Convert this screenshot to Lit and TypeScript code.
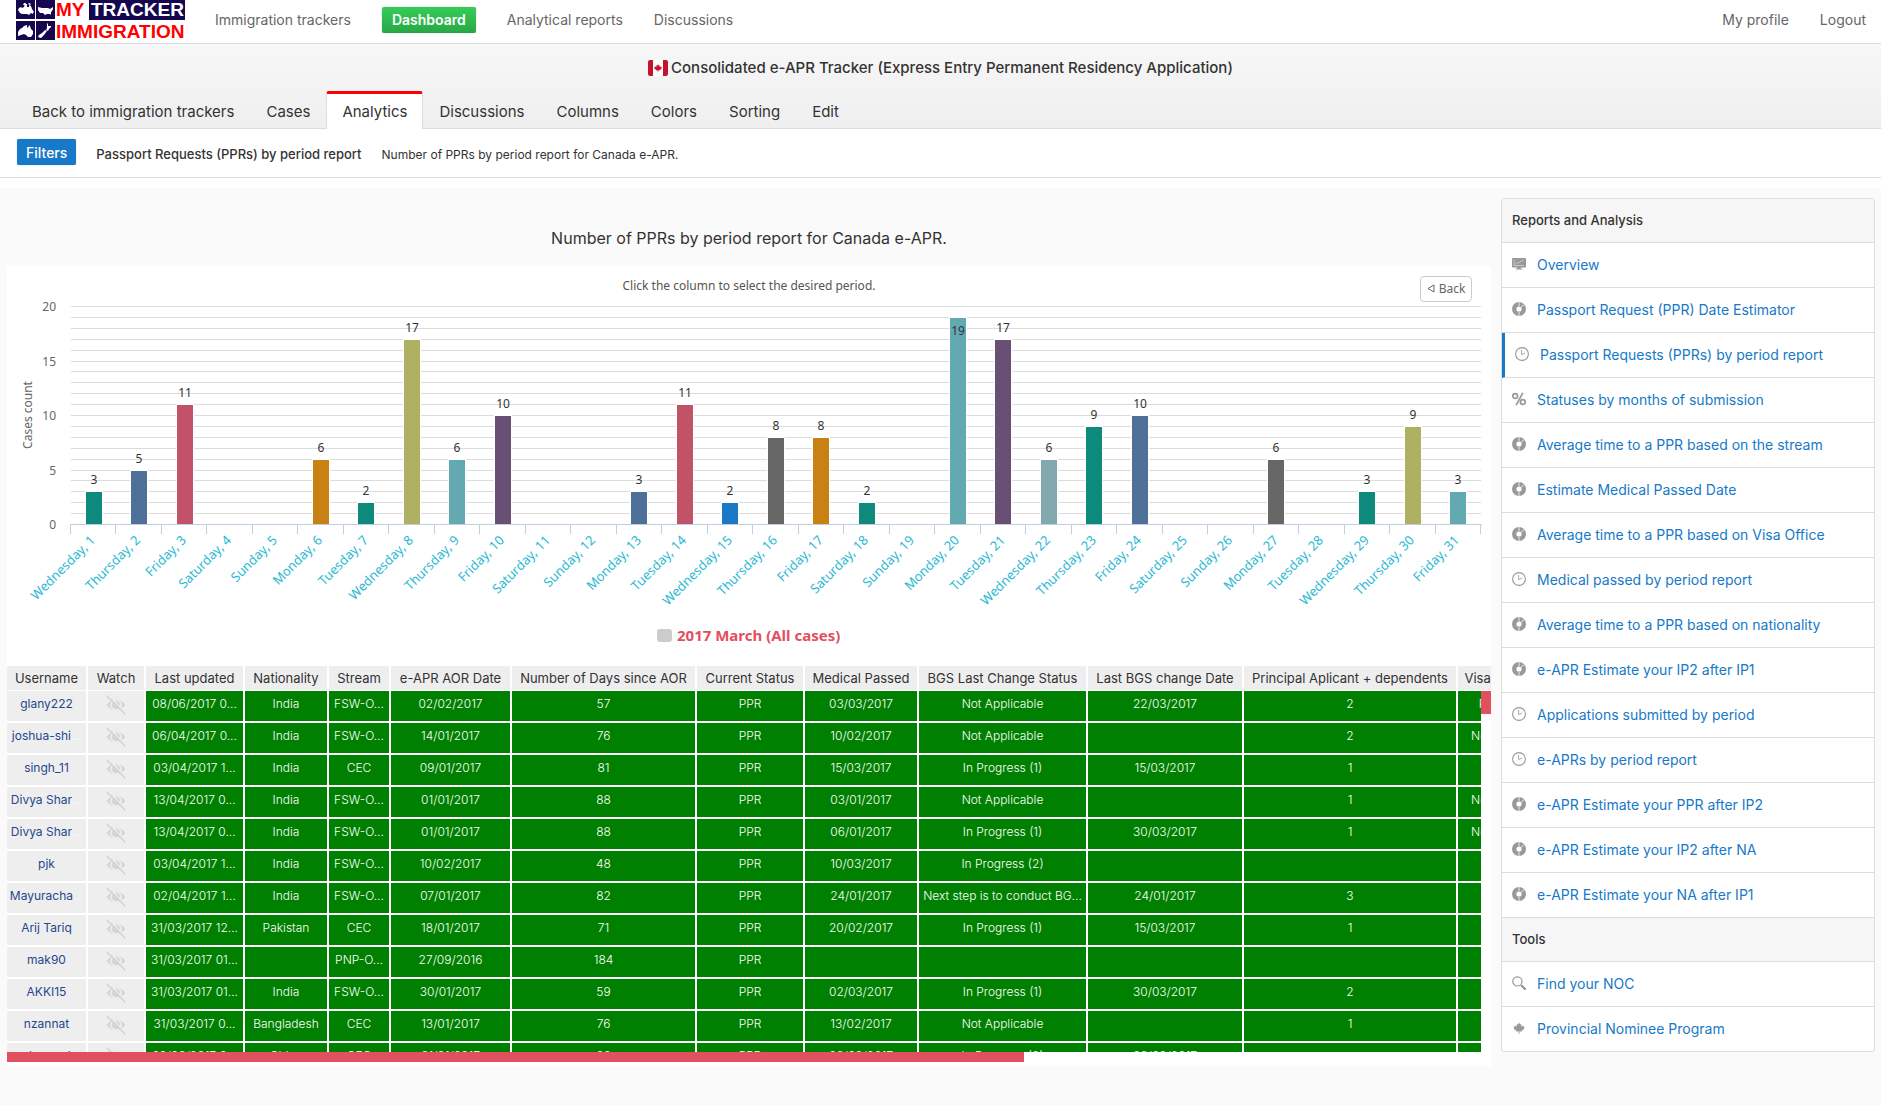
import { LitElement, html, svg, css, nothing } from "lit";
import { customElement, property } from "lit/decorators.js";
import { classMap } from "lit/directives/class-map.js";

const COLORS: Record<string, string> = {
  teal: "#0e8a7d", blue: "#4f7199", rose: "#c25268", orange: "#c98114", olive: "#afb162",
  sea: "#62a9b1", plum: "#684f73", azure: "#1779c8", grey: "#666666", steel: "#82a8b0",
};

const WEEK = ["Wednesday", "Thursday", "Friday", "Saturday", "Sunday", "Monday", "Tuesday"];

const COUNTS: Record<number, [number, string]> = {
  1: [3, "teal"], 2: [5, "blue"], 3: [11, "rose"], 6: [6, "orange"], 7: [2, "teal"],
  8: [17, "olive"], 9: [6, "sea"], 10: [10, "plum"], 13: [3, "blue"], 14: [11, "rose"],
  15: [2, "azure"], 16: [8, "grey"], 17: [8, "orange"], 18: [2, "teal"], 20: [19, "sea"],
  21: [17, "plum"], 22: [6, "steel"], 23: [9, "teal"], 24: [10, "blue"], 27: [6, "grey"],
  29: [3, "teal"], 30: [9, "olive"], 31: [3, "sea"],
};

const COLUMNS: [string, number][] = [
  ["Username", 81], ["Watch", 58], ["Last updated", 99], ["Nationality", 84], ["Stream", 62],
  ["e-APR AOR Date", 121], ["Number of Days since AOR", 185], ["Current Status", 108],
  ["Medical Passed", 114], ["BGS Last Change Status", 169], ["Last BGS change Date", 156],
  ["Principal Aplicant + dependents", 214], ["Visa Office", 82],
];

const ROWS: string[][] = [
  ["glany222", "08/06/2017 0...", "India", "FSW-O...", "02/02/2017", "57", "PPR", "03/03/2017", "Not Applicable", "22/03/2017", "2", "Poland"],
  ["joshua-shi...", "06/04/2017 0...", "India", "FSW-O...", "14/01/2017", "76", "PPR", "10/02/2017", "Not Applicable", "", "2", "New York"],
  ["singh_11", "03/04/2017 1...", "India", "CEC", "09/01/2017", "81", "PPR", "15/03/2017", "In Progress (1)", "15/03/2017", "1", ""],
  ["Divya Shar...", "13/04/2017 0...", "India", "FSW-O...", "01/01/2017", "88", "PPR", "03/01/2017", "Not Applicable", "", "1", "New York"],
  ["Divya Shar...", "13/04/2017 0...", "India", "FSW-O...", "01/01/2017", "88", "PPR", "06/01/2017", "In Progress (1)", "30/03/2017", "1", "New York"],
  ["pjk", "03/04/2017 1...", "India", "FSW-O...", "10/02/2017", "48", "PPR", "10/03/2017", "In Progress (2)", "", "", ""],
  ["Mayuracha...", "02/04/2017 1...", "India", "FSW-O...", "07/01/2017", "82", "PPR", "24/01/2017", "Next step is to conduct BG...", "24/01/2017", "3", "Ottaw"],
  ["Arij Tariq", "31/03/2017 12...", "Pakistan", "CEC", "18/01/2017", "71", "PPR", "20/02/2017", "In Progress (1)", "15/03/2017", "1", ""],
  ["mak90", "31/03/2017 01...", "", "PNP-O...", "27/09/2016", "184", "PPR", "", "", "", "", ""],
  ["AKKI15", "31/03/2017 01...", "India", "FSW-O...", "30/01/2017", "59", "PPR", "02/03/2017", "In Progress (1)", "30/03/2017", "2", "Ottaw"],
  ["nzannat", "31/03/2017 0...", "Bangladesh", "CEC", "13/01/2017", "76", "PPR", "13/02/2017", "Not Applicable", "", "1", ""],
  ["ahsanud", "29/03/2017 0...", "China", "CEC", "31/01/2017", "60", "PPR", "02/03/2017", "In Progress (2)", "02/03/2017", "", ""],
];

const REPORTS: [string, string][] = [
  ["screen", "Overview"],
  ["donut", "Passport Request (PPR) Date Estimator"],
  ["clock", "Passport Requests (PPRs) by period report"],
  ["percent", "Statuses by months of submission"],
  ["donut", "Average time to a PPR based on the stream"],
  ["donut", "Estimate Medical Passed Date"],
  ["donut", "Average time to a PPR based on Visa Office"],
  ["clock", "Medical passed by period report"],
  ["donut", "Average time to a PPR based on nationality"],
  ["donut", "e-APR Estimate your IP2 after IP1"],
  ["clock", "Applications submitted by period"],
  ["clock", "e-APRs by period report"],
  ["donut", "e-APR Estimate your PPR after IP2"],
  ["donut", "e-APR Estimate your IP2 after NA"],
  ["donut", "e-APR Estimate your NA after IP1"],
];

const TOOLS: [string, string][] = [
  ["search", "Find your NOC"],
  ["leaf", "Provincial Nominee Program"],
];

const LEAF = "M7 0.5 L8.2 3 L9.8 2.4 L9.4 5.4 L11 4.2 L11.5 5.2 L13.4 5 L12.6 7 L13.3 7.8 L10 10.2 L10.2 11.2 L7.5 10.8 L7.5 13.8 L6.5 13.8 L6.5 10.8 L3.8 11.2 L4 10.2 L0.7 7.8 L1.4 7 L0.6 5 L2.5 5.2 L3 4.2 L4.6 5.4 L4.2 2.4 L5.8 3 Z";

const ICONS: Record<string, unknown> = {
  screen: svg`
    <rect x="0" y="1" width="14" height="9.500" rx="1" fill="#999"/>
    <path d="M2 2.5v6h10M3.5 7l2-1.5 1.5 .7 2-2.2 2.5-.8" fill="none" stroke="#ddd" stroke-width="0.7"/>
    <path d="M5.5 10h3l.4 1.6h1.3v1h-6.4v-1h1.3z" fill="#999"/>`,
  donut: svg`
    <circle cx="7" cy="7" r="4.8" fill="none" stroke="#999" stroke-width="4.4"/>
    <path d="M7 0v4M7 10v4M9 5.2L12.6 2.4" stroke="#fff" stroke-width="0.8"/>`,
  clock: svg`
    <circle cx="7" cy="7" r="6.4" fill="none" stroke="#999" stroke-width="1.1"/>
    <path d="M6.6 2.8v4.8l3.6-1.6" fill="none" stroke="#aaa" stroke-width="1"/>`,
  percent: svg`
    <g fill="none" stroke="#999" stroke-width="1.7">
      <circle cx="3.2" cy="4" r="2.4"/><circle cx="10.8" cy="10" r="2.4"/>
      <path d="M10.8 .8L4.2 13.200"/>
    </g>`,
  search: svg`
    <circle cx="5.4" cy="5.4" r="4.6" fill="none" stroke="#999" stroke-width="1.2"/>
    <path d="M8.8 8.8l1.3 1.3" stroke="#999" stroke-width="1.2"/>
    <path d="M10 10l3 3" stroke="#999" stroke-width="2.4" stroke-linecap="round"/>`,
  leaf: svg`<path transform="translate(1 1) scale(.86)" d="${LEAF}" fill="#999"/>`,
};

@customElement("site-logo")
class SiteLogo extends LitElement {
  static styles = css`
    :host { display: block; }
    .logo { display: block; width: 170px; height: 41px; overflow: visible; }
    .word { font: 700 19px "Liberation Sans", sans-serif; }
  `;
  render() {
    return html`<svg class="logo" viewBox="0 0 170 41" role="img" aria-label="My Tracker Immigration">
      <g fill="#14064f">
        <rect x="0" y="0" width="19" height="19"/><rect x="20" y="0" width="19" height="19"/>
        <rect x="0" y="21" width="19" height="19"/><rect x="20" y="21" width="19" height="19"/>
        <rect x="73" y="0" width="96" height="20"/>
      </g>
      <g fill="#fff">
        <path d="M3 8l2-1 1 1 2-1 1-3 2 0 0 3 2 0 0-2 2 1 1 3 2 3-1 1 0 1-2-1-2 2-2-1-5 0-2-1-2-3z"/>
        <path d="M7 5l1-2 2 0-1 2zM12 4l1-1 2 1-1 1z"/>
        <path d="M22 7l4 1 6 0 2 1 3-2 0 2-1 2-1 1 0 3-1-1-3 0-2 1-2-2-3 0-2-3z"/>
        <path d="M2 32l2-3 2-1 2-2 3-1 0 2 1 1 1-3 1 1 1 3 2 2 0 3-2 3-3 0-2-2-2-1-3 1-3 1z"/>
        <path d="M31 23l1 1 0 2 3 0 0 1-2 2-1 2-2-1 1-2 0-2zM29 30l2 1-3 4-3 3-3-1 1-2 3-2z"/>
      </g>
      <text class="word" x="40" y="16" fill="#f00">MY</text>
      <text class="word" x="75" y="16" fill="#fff">TRACKER</text>
      <text class="word" x="40" y="38" fill="#f00">IMMIGRATION</text>
    </svg>`;
  }
}

@customElement("period-chart")
class PeriodChart extends LitElement {
  static styles = css`
    :host { display: block; position: relative; }
    .chart { display: block; width: 100%; height: auto; font-family: "Noto Sans", "Open Sans", sans-serif; font-size: 12px; }
    .grid { stroke: #dcdcdc; }
    .axis { stroke: #c0d0e0; }
    .scale { fill: #666; text-anchor: end; }
    .title { fill: #666; text-anchor: middle; }
    .subtitle { fill: #555; text-anchor: middle; }
    .value { fill: #333; text-anchor: middle; }
    .day { fill: #2ab9d4; text-anchor: end; font-size: 13px; }
    .bar { stroke: #fff; }
    .legend { fill: #e0505e; font-size: 15px; font-weight: 700; }
    .back {
      position: absolute; top: 10px; right: 19px; width: 52px; height: 26px; padding: 0 0 2px;
      display: flex; align-items: center; justify-content: center; gap: 4px;
      border: 1px solid #ccc; border-radius: 4px; background: #fff; color: #666;
      font: 12px "Noto Sans", sans-serif;
    }
    .back-icon { width: 8px; height: 9px; }
  `;

  private level(v: number) { return 258 - Math.round(v * 10.895); }

  render() {
    const days = Array.from({ length: 31 }, (_, i) => i + 1);
    const levels = Array.from({ length: 20 }, (_, i) => i + 1);
    return html`
      <svg class="chart" viewBox="0 0 1484 400" role="img" aria-label="Number of PPRs by period">
        <text class="subtitle" x="742" y="24">Click the column to select the desired period.</text>
        ${levels.map((v) => svg`<line class="grid" x1="64" x2="1474" y1="${this.level(v) + 0.5}" y2="${this.level(v) + 0.5}"/>`)}
        ${[0, 5, 10, 15, 20].map((v) => svg`<text class="scale" x="49" y="${this.level(v) + 5}">${v}</text>`)}
        <text class="title" transform="translate(25 149) rotate(-90)">Cases count</text>
        ${days.map((d) => {
          const item = COUNTS[d];
          if (!item) return nothing;
          const x = Math.floor(79.1 + 45.483 * (d - 1));
          const y = this.level(item[0]);
          return svg`<rect class="bar" x="${x - 0.5}" y="${y + 0.5}" width="17" height="${258 - y}" fill="${COLORS[item[1]]}"/>
            <text class="value" x="${x + 8}" y="${item[0] > 18 ? y + 18 : y - 7}">${item[0]}</text>`;
        })}
        <line class="axis" x1="63" x2="1475" y1="258.5" y2="258.5"/>
        ${Array.from({ length: 32 }, (_, i) => Math.floor(63.3 + 45.49 * i) + 0.5).map((x) =>
          svg`<line class="axis" x1="${x}" x2="${x}" y1="259" y2="268"/>`)}
        ${days.map((d) => svg`<text class="day"
          transform="translate(${Math.round(89 + 45.483 * (d - 1))} 275) rotate(-45)">${WEEK[(d - 1) % 7]}, ${d}</text>`)}
        <rect x="650" y="363" width="15" height="13" rx="3" fill="#ccc"/>
        <text class="legend" x="670" y="375">2017 March (All cases)</text>
      </svg>
      <button class="back" type="button">
        <svg class="back-icon" viewBox="0 0 8 9" aria-hidden="true"><path d="M7 1v7L1 4.500z" fill="none" stroke="#666"/></svg>
        Back
      </button>`;
  }
}

@customElement("case-table")
class CaseTable extends LitElement {
  static styles = css`
    :host { display: block; }
    .view { position: relative; overflow: hidden; height: 386px; }
    .table { table-layout: fixed; width: 100%; border-collapse: separate; border-spacing: 0; }
    .head {
      height: 24px; padding: 0; background: #eee; color: #333; font-size: 13px; font-weight: 400; line-height: 24px;
      border-right: 2px solid #fff; border-bottom: 1px solid #fff; white-space: nowrap; text-align: center;
    }
    .cell {
      height: 26px; padding: 0 0 4px; background: #008000; color: #fff; font-size: 12px; font-weight: 300; line-height: 26px;
      border-right: 2px solid #fff; border-bottom: 2px solid #fff; white-space: nowrap; overflow: hidden; text-align: center;
    }
    .plain { background: #eee; }
    .user { color: #26478d; text-decoration: none; font-weight: 400; }
    .watch { display: inline-flex; padding: 0; border: 0; background: none; vertical-align: middle; }
    .eye { width: 20px; height: 20px; }
    .vtrack { position: absolute; top: 25px; right: 0; bottom: 0; width: 10px; background: #fff; }
    .vthumb { height: 23px; background: #e0505e; }
    .htrack { padding-bottom: 4px; }
    .hthumb { width: 68.5%; height: 10px; background: #e0505e; }
  `;

  render() {
    return html`
      <div class="view">
        <table class="table">
          <colgroup>${COLUMNS.map(([, w]) => html`<col style="width:${w}px">`)}</colgroup>
          <thead><tr>${COLUMNS.map(([name]) => html`<th class="head" scope="col">${name}</th>`)}</tr></thead>
          <tbody>
            ${ROWS.map(([user, ...rest]) => html`<tr>
              <td class="cell plain"><a class="user" href="#">${user.replace("...", "")}</a>${user.endsWith("...") ? "..." : nothing}</td>
              <td class="cell plain"><button class="watch" type="button" aria-label="Watch ${user}">
                <svg class="eye" viewBox="0 0 20 20" aria-hidden="true">
                  <path d="M.5 10Q4.500 4.500 10 4.500T19.500 10Q15.500 15.500 10 15.500T.5 10z" fill="#d6d6d6"/>
                  <circle cx="10" cy="10" r="5" fill="#d6d6d6" stroke="#eee" stroke-width="1.500"/>
                  <path d="M8 9.500a2.200 2.200 0 0 1 2-2" fill="none" stroke="#eee"/>
                  <path d="M2.500 .5L19.500 17.500" stroke="#eee" stroke-width="1.500"/>
                  <path d="M.5 .5L19.500 19.500" stroke="#d0d0d0" stroke-width="1.300"/>
                </svg></button></td>
              ${rest.map((text) => html`<td class="cell">${text}</td>`)}
            </tr>`)}
          </tbody>
        </table>
        <div class="vtrack"><div class="vthumb"></div></div>
      </div>
      <div class="htrack"><div class="hthumb"></div></div>`;
  }
}

@customElement("report-menu")
class ReportMenu extends LitElement {
  static styles = css`
    :host { display: block; border: 1px solid #ddd; border-radius: 3px; overflow: hidden; background: #fff; }
    .heading { margin: 0; padding: 0 10px; height: 43px; line-height: 43px; background: #f6f6f6; color: #333; font-size: 13px; font-weight: 500; }
    .heading, .item { border-bottom: 1px solid #ddd; }
    .item { box-sizing: border-box; display: flex; align-items: center; gap: 11px; height: 45px; padding: 0 10px 2px; color: #1779c8; font-size: 14px; text-decoration: none; }
    .last { height: 44px; border-bottom: 0; }
    .active { border-left: 3px solid #1779c8; }
    .icon { flex: none; width: 14px; height: 14px; }
  `;
  @property({ type: Number }) active = 2;

  private item(entry: [string, string], active: boolean, last: boolean) {
    return html`<a class="item ${classMap({ active, last })}" href="#">
      <svg class="icon" viewBox="0 0 14 14" aria-hidden="true">${ICONS[entry[0]]}</svg>
      <span>${entry[1]}</span></a>`;
  }

  render() {
    return html`
      <h2 class="heading">Reports and Analysis</h2>
      ${REPORTS.map((r, i) => this.item(r, i === this.active, false))}
      <h2 class="heading">Tools</h2>
      ${TOOLS.map((t, i) => this.item(t, false, i === TOOLS.length - 1))}`;
  }
}

@customElement("app-root")
class AppRoot extends LitElement {
  static styles = css`
    :host {
      display: block; min-height: 100vh; background: #fafafa; color: #333;
      font-family: Inter, "Noto Sans", sans-serif; font-size: 14px;
    }
    .top { display: flex; align-items: center; height: 43px; padding: 0 15px 0 16px; background: #fff; border-bottom: 1px solid #ddd; }
    .logo { align-self: flex-start; }
    .links { display: flex; align-items: center; gap: 31px; flex: 1; margin-left: 29px; padding-bottom: 4px; }
    .link { color: #666; text-decoration: none; }
    .current { padding: 0 10px; height: 26px; line-height: 26px; border-radius: 2px; color: #fff; font-weight: 600; background: linear-gradient(#35cc58, #28a745); box-shadow: 0 0 1px #888; }
    .push { margin-left: auto; }
    .band { display: flex; flex-direction: column; justify-content: space-between; height: 84px; background: linear-gradient(#f7f7f7, #efefef); border-bottom: 1px solid #ddd; }
    .title { display: flex; align-items: center; justify-content: center; gap: 3px; margin: 14px 0 0; font-size: 15px; line-height: 20px; font-weight: 500; }
    .flag { width: 20px; height: 16px; }
    .tabs { display: flex; padding-left: 16px; margin-bottom: -1px; }
    .tab { box-sizing: border-box; height: 38px; padding: 0 15px; border: 1px solid transparent; border-top-width: 3px; border-bottom: 0; font-size: 15px; line-height: 36px; color: #333; text-decoration: none; }
    .selected { background: #fff; border-color: #f00 #ddd; border-radius: 3px 3px 0 0; }
    .filterbar { display: flex; align-items: center; gap: 20px; height: 48px; padding-left: 17px; background: #fff; border-bottom: 1px solid #ddd; }
    .filters { height: 26px; padding: 0 9px; margin-bottom: 2px; border: 0; border-radius: 2px; background: #1779c8; color: #fff; font: 500 14px Inter, sans-serif; box-shadow: 0 0 1px #888; }
    .report, .note { margin: 2px 0 0; }
    .report { font-size: 13px; font-weight: 500; }
    .note { font-size: 12px; }
    .strip { height: 10px; background: #fff; }
    .body { display: flex; align-items: flex-start; gap: 10px; padding: 10px 6px 39px 7px; }
    .main { flex: 1; min-width: 0; }
    .caption { margin: 0; height: 68px; line-height: 80px; text-align: center; font-size: 16px; font-weight: 400; }
    .card { background: #fff; }
    .side { flex: none; width: 372px; }
  `;

  render() {
    const tabs = ["Back to immigration trackers", "Cases", "Analytics", "Discussions", "Columns", "Colors", "Sorting", "Edit"];
    return html`
      <header>
        <div class="top">
          <site-logo class="logo"></site-logo>
          <nav class="links" aria-label="Site">
            <a class="link" href="#">Immigration trackers</a>
            <a class="link current" href="#">Dashboard</a>
            <a class="link" href="#">Analytical reports</a>
            <a class="link" href="#">Discussions</a>
            <a class="link push" href="#">My profile</a>
            <a class="link" href="#">Logout</a>
          </nav>
        </div>
        <div class="band">
          <h1 class="title">
            <svg class="flag" viewBox="0 0 20 16" aria-hidden="true">
              <rect width="20" height="16" rx="2" fill="#fff"/>
              <path d="M2 0h3v16H2a2 2 0 0 1-2-2V2a2 2 0 0 1 2-2zM15 0h3a2 2 0 0 1 2 2v12a2 2 0 0 1-2 2h-3z" fill="#c4122f"/>
              <path transform="translate(5.800 3.800) scale(.6)" d="${LEAF}" fill="#c4122f"/>
            </svg>
            <span>Consolidated e-APR Tracker (Express Entry Permanent Residency Application)</span>
          </h1>
          <nav class="tabs" aria-label="Tracker">
            ${tabs.map((t) => html`<a class="tab ${classMap({ selected: t === "Analytics" })}" href="#">${t}</a>`)}
          </nav>
        </div>
        <div class="filterbar">
          <button class="filters" type="button">Filters</button>
          <p class="report">Passport Requests (PPRs) by period report</p>
          <p class="note">Number of PPRs by period report for Canada e-APR.</p>
        </div>
        <div class="strip"></div>
      </header>
      <div class="body">
        <main class="main">
          <h2 class="caption">Number of PPRs by period report for Canada e-APR.</h2>
          <div class="card">
            <period-chart></period-chart>
            <case-table></case-table>
          </div>
        </main>
        <report-menu class="side"></report-menu>
      </div>`;
  }
}
